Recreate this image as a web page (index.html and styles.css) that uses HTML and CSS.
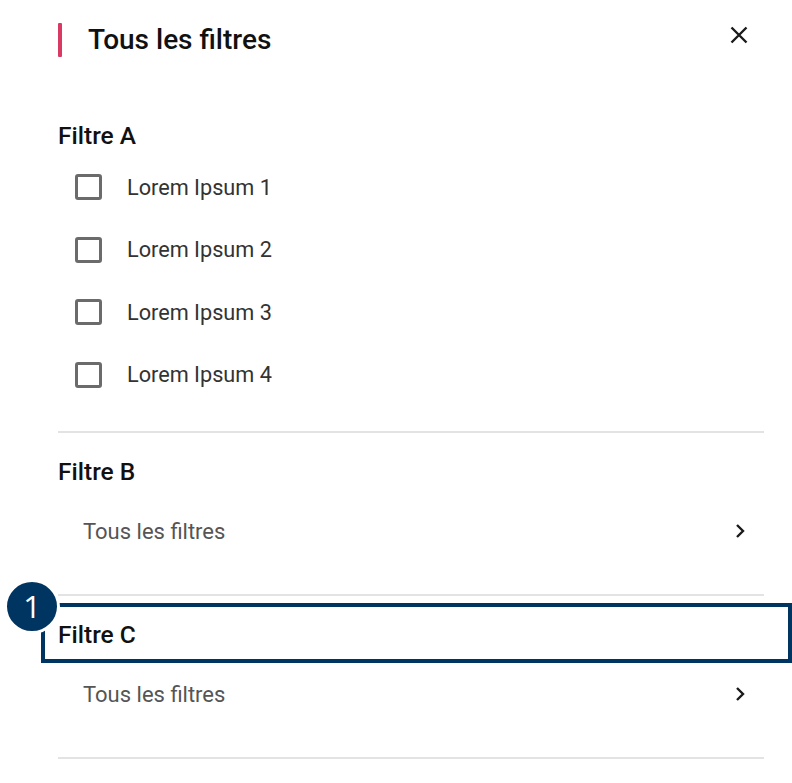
FILE: index.html
```html
<!DOCTYPE html>
<html lang="fr">
<head>
<meta charset="utf-8">
<title>Tous les filtres</title>
<link rel="stylesheet" href="styles.css">
</head>
<body>
<div class="panel">
  <header class="header">
    <div class="title-wrap">
      <span class="accent"></span>
      <h1 class="title">Tous les filtres</h1>
    </div>
    <button class="close" aria-label="Fermer">
      <svg width="18" height="18" viewBox="0 0 18 18"><path d="M1.5 1.5 L16.5 16.5 M16.5 1.5 L1.5 16.5" stroke="#1a1a1a" stroke-width="2.4" fill="none"/></svg>
    </button>
  </header>

  <section class="section section-a">
    <h2 class="heading">Filtre A</h2>
    <ul class="checks">
      <li class="check-row"><span class="box"></span><span class="label">Lorem Ipsum 1</span></li>
      <li class="check-row"><span class="box"></span><span class="label">Lorem Ipsum 2</span></li>
      <li class="check-row"><span class="box"></span><span class="label">Lorem Ipsum 3</span></li>
      <li class="check-row"><span class="box"></span><span class="label">Lorem Ipsum 4</span></li>
    </ul>
  </section>

  <section class="section section-link">
    <h2 class="heading">Filtre B</h2>
    <div class="link-row"><span class="link-text">Tous les filtres</span>
      <svg class="chev" width="10" height="16" viewBox="0 0 10 16"><path d="M2 2 L8 8 L2 14" stroke="#1a1a1a" stroke-width="2.4" fill="none"/></svg>
    </div>
  </section>

  <section class="section section-link">
    <h2 class="heading">Filtre C</h2>
    <div class="link-row"><span class="link-text">Tous les filtres</span>
      <svg class="chev" width="10" height="16" viewBox="0 0 10 16"><path d="M2 2 L8 8 L2 14" stroke="#1a1a1a" stroke-width="2.4" fill="none"/></svg>
    </div>
  </section>

  <div class="highlight"></div>
  <div class="badge">1</div>
</div>
</body>
</html>
```
FILE: styles.css
```css
* { box-sizing: border-box; }
html, body { margin: 0; padding: 0; background: #ffffff; }
body { font-family: Roboto, "Noto Sans", Arial, sans-serif; color: #111; }

.panel {
  position: relative;
  width: 792px;
  height: 783px;
  padding: 0 28px 0 58px;
  overflow: hidden;
}

.header {
  height: 80px;
  display: flex;
  justify-content: space-between;
  align-items: flex-start;
}
.title-wrap {
  display: flex;
  align-items: center;
  gap: 26px;
  margin-top: 23px;
}
.accent {
  width: 4px;
  height: 34px;
  background: #d83a63;
  border-radius: 1px;
}
.title {
  margin: 0;
  font-size: 28px;
  font-weight: 500;
  line-height: 34px;
  color: #111;
}
.close {
  margin: 26px 16px 0 0;
  padding: 0;
  border: 0;
  background: none;
  width: 18px;
  height: 18px;
  display: block;
}
.close svg { display: block; }

.section { border-bottom: 2px solid #e3e3e3; }
.section-a { padding: 41px 0 25px; }
.heading {
  margin: 0;
  height: 30px;
  line-height: 30px;
  font-size: 24.5px;
  font-weight: 500;
  color: #111;
}
.checks {
  list-style: none;
  margin: 5px 0 0;
  padding: 0;
}
.check-row {
  height: 62.5px;
  display: flex;
  align-items: center;
  padding-left: 17px;
  gap: 25px;
}
.box {
  width: 27px;
  height: 26px;
  border: 3px solid #6b6b6b;
  border-radius: 3px;
  flex: none;
}
.label {
  font-size: 21.7px;
  color: #333;
}

.section-link { padding: 24px 0 38px; }
.link-row {
  margin-top: 19px;
  height: 50px;
  display: flex;
  align-items: center;
  justify-content: space-between;
  padding: 0 19px 0 25px;
}
.link-text {
  font-size: 22px;
  color: #555;
}
.chev { display: block; }

.highlight {
  position: absolute;
  left: 41px;
  top: 603px;
  width: 751px;
  height: 60px;
  border: 4.5px solid #003461;
}
.badge {
  position: absolute;
  left: 7px;
  top: 582px;
  width: 50px;
  height: 49px;
  border-radius: 50%;
  background: #003461;
  color: #fff;
  font-family: "Open Sans", Roboto, sans-serif;
  font-size: 31px;
  line-height: 49px;
  text-align: center;
  border: 3px solid #fff;
  box-sizing: content-box;
  margin: -3px 0 0 -3px;
}
```
